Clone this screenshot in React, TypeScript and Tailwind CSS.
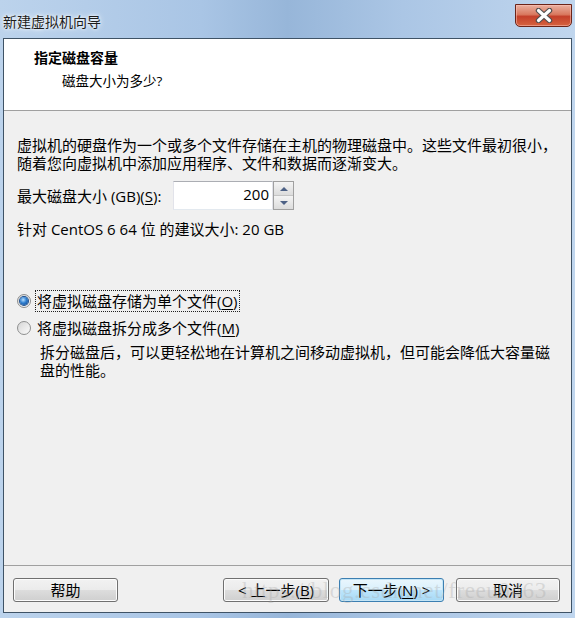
import type { ReactNode } from "react";

const ui = "font-['Open_Sans','Noto_Sans_CJK_SC',sans-serif]";

function Key({ children }: { children: ReactNode }) {
  return <span className="underline underline-offset-[2px]">{children}</span>;
}

function Button({
  children,
  primary,
  className = "",
}: {
  children: ReactNode;
  primary?: boolean;
  className?: string;
}) {
  const skin = primary
    ? "border-[#3c7fb1] bg-[linear-gradient(to_bottom,#eaf6fd_0%,#d9f0fc_50%,#bee6fd_50%,#a7d9f5_100%)] shadow-[inset_0_0_0_1px_#c4e5f6]"
    : "border-[#707070] bg-[linear-gradient(to_bottom,#f2f2f2_0%,#ebebeb_50%,#dddddd_50%,#cfcfcf_100%)] shadow-[inset_0_0_0_1px_#fcfcfc]";
  return (
    <button
      className={`flex h-[24px] items-center justify-center rounded-[3px] border text-[15px] leading-none text-black ${skin} ${className}`}
    >
      {children}
    </button>
  );
}

function Radio({ checked }: { checked?: boolean }) {
  return (
    <span className="flex h-[14px] w-[14px] items-center justify-center rounded-full border border-[#8e8f8f] bg-[linear-gradient(135deg,#d6d6d6,#fbfbfb)]">
      {checked && (
        <span className="h-[8px] w-[8px] rounded-full bg-[radial-gradient(circle_at_40%_35%,#b9e0ff_0%,#2f7fd0_45%,#0c3f84_100%)] shadow-[0_0_0_1px_#1c4f8f]" />
      )}
    </span>
  );
}

function CloseIcon() {
  return (
    <svg width="20" height="15" viewBox="0 0 20 15">
      <path d="M4.5 2.5 L15.5 12.5 M15.5 2.5 L4.5 12.5" stroke="#505050" strokeWidth="5.5" strokeLinecap="round" />
      <path d="M4.5 2.5 L15.5 12.5 M15.5 2.5 L4.5 12.5" stroke="#ffffff" strokeWidth="3.2" strokeLinecap="round" />
    </svg>
  );
}

function Spinner() {
  return (
    <div className="flex h-[29px] w-[21px] flex-col border border-[#a0a0a0] bg-white">
      <div className="flex flex-1 items-center justify-center border-b border-[#c5c5c5] bg-[linear-gradient(to_bottom,#f4f4f4,#dcdcdc)]">
        <span className="h-0 w-0 border-x-[4px] border-b-[4px] border-x-transparent border-b-[#4d6185]" />
      </div>
      <div className="flex flex-1 items-center justify-center bg-[linear-gradient(to_bottom,#f4f4f4,#dcdcdc)]">
        <span className="h-0 w-0 border-x-[4px] border-t-[4px] border-x-transparent border-t-[#4d6185]" />
      </div>
    </div>
  );
}

export default function App() {
  return (
    <div
      className={`relative flex h-[618px] w-[575px] flex-col overflow-hidden bg-[linear-gradient(to_right,#bcd3ec_0%,#a9c5e5_35%,#97b6d9_50%,#abc6e5_70%,#c0d6ee_100%)] text-black ${ui}`}
    >
      <div className="flex h-[38px] items-start justify-between pl-[3px] pr-[3px]">
        <span className="mt-[13px] text-[14px] leading-[18px] text-[#1c1c1c] [text-shadow:0_0_6px_#ffffff,0_0_3px_#ffffff]">
          新建虚拟机向导
        </span>
        <div className="mt-[4px] flex h-[23px] w-[57px] items-center justify-center rounded-b-[5px] border border-[#6b2418] bg-[linear-gradient(to_bottom,#eab0a0_0%,#d9795f_45%,#c4402a_55%,#d6633f_100%)] shadow-[inset_0_0_0_1px_rgba(255,200,190,0.5)]">
          <CloseIcon />
        </div>
      </div>

      <div className="mx-[3px] flex h-[575px] flex-col border border-[#3f5366] bg-[#f0f0f0]">
        <div className="h-[72px] border-b border-[#a0a0a0] bg-white pt-[9px]">
          <div className="pl-[30px] text-[14px] font-bold leading-[20px]">指定磁盘容量</div>
          <div className="mt-[4px] pl-[58px] text-[13.5px] leading-[18px]">磁盘大小为多少?</div>
        </div>

        <div className="flex flex-1 flex-col pl-[13px] pt-[25px] text-[15px] leading-[18px]">
          <p>
            虚拟机的硬盘作为一个或多个文件存储在主机的物理磁盘中。这些文件最初很小，
            <br />
            随着您向虚拟机中添加应用程序、文件和数据而逐渐变大。
          </p>

          <div className="mt-[9px] flex h-[29px] items-center">
            <span className="w-[156px]">
              最大磁盘大小 (GB)(<Key>S</Key>):
            </span>
            <div className="flex h-[29px] w-[100px] items-center justify-end border border-[#abadb3] border-b-[#e3e9ef] border-x-[#e2e3ea] bg-white pr-[3px] pb-[3px]">
              200
            </div>
            <Spinner />
          </div>

          <p className="mt-[10px]">针对 CentOS 6 64 位 的建议大小: 20 GB</p>

          <div className="mt-[52px] flex h-[22px] items-center gap-[4px]">
            <Radio checked />
            <span className="border border-dotted border-[#202020] px-[1px] leading-[20px]">
              将虚拟磁盘存储为单个文件(<Key>O</Key>)
            </span>
          </div>
          <div className="mt-[5px] flex h-[22px] items-center gap-[6px]">
            <Radio />
            <span>
              将虚拟磁盘拆分成多个文件(<Key>M</Key>)
            </span>
          </div>
          <p className="mt-[4px] pl-[23px]">
            拆分磁盘后，可以更轻松地在计算机之间移动虚拟机，但可能会降低大容量磁
            <br />
            盘的性能。
          </p>
        </div>

        <div className="flex h-[47px] border-t border-[#a0a0a0] pl-[9px] pr-[11px] pt-[12px]">
          <Button className="w-[105px]">帮助</Button>
          <div className="flex-1" />
          <Button className="w-[106px]">
            &lt; 上一步(<Key>B</Key>)
          </Button>
          <Button primary className="ml-[10px] w-[105px]">
            下一步(<Key>N</Key>) &gt;
          </Button>
          <Button className="ml-[12px] w-[104px]">取消</Button>
        </div>
      </div>

      <div className="pointer-events-none absolute left-[242px] top-[577px] whitespace-nowrap font-['Liberation_Serif',serif] text-[23px] leading-[28px] tracking-[0.6px] text-[rgba(170,170,170,0.35)]">
        https://blog.csdn.net/freeu0463
      </div>
    </div>
  );
}
